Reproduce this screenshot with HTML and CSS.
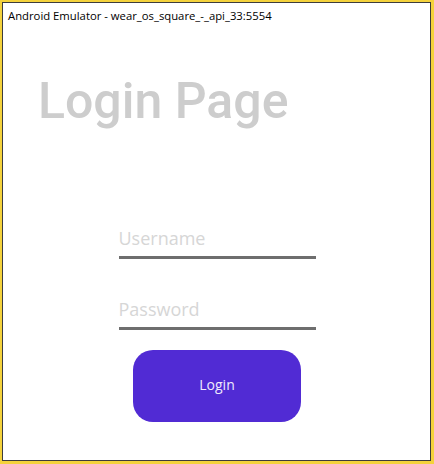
FILE: index.html
```html
<!DOCTYPE html>
<html>
<head>
<meta charset="utf-8">
<link rel="stylesheet" href="styles.css">
</head>
<body>
<div class="frame">
  <div class="window">
    <div class="titlebar">Android Emulator - wear_os_square_-_api_33:5554</div>
    <div class="content">
      <h1 class="heading">Login Page</h1>
      <div class="form">
        <input class="field field-user" type="text" placeholder="Username">
        <input class="field field-pass" type="password" placeholder="Password">
        <button class="login-btn">Login</button>
      </div>
    </div>
  </div>
</div>
</body>
</html>
```
FILE: styles.css
```css
html, body {
  margin: 0;
  padding: 0;
  background: #ffffff;
}
.frame {
  width: 434px;
  height: 464px;
  box-sizing: border-box;
  border-style: solid;
  border-color: #f4d23c;
  border-width: 2px 3px 3px 2px;
}
.window {
  height: 100%;
  box-sizing: border-box;
  border: 1px solid #3c3c3c;
  background: #ffffff;
  display: flex;
  flex-direction: column;
}
.titlebar {
  font-family: "Open Sans", "Noto Sans", sans-serif;
  font-size: 11.3px;
  line-height: 16px;
  color: #000000;
  padding: 5px 0 0 5px;
  height: 21px;
  box-sizing: border-box;
  white-space: nowrap;
}
.content {
  display: flex;
  flex-direction: column;
  flex: 1;
}
.heading {
  margin: 52px 0 0 35px;
  font-family: Roboto, sans-serif;
  font-weight: 500;
  font-size: 50px;
  line-height: 50px;
  height: 50px;
  color: #cdcdcd;
}
.form {
  display: flex;
  flex-direction: column;
  align-items: center;
  margin-top: 100px;
  padding-left: 1px;
}
.field {
  width: 197px;
  box-sizing: border-box;
  border: none;
  border-bottom: 3px solid #6e6e6e;
  outline: none;
  padding: 0 0 6px 0;
  margin: 0;
  font-family: "Open Sans", "Noto Sans", sans-serif;
  font-size: 18px;
  line-height: 24px;
  height: 33px;
  color: #333333;
  background: transparent;
}
.field::placeholder {
  color: #d6d6d6;
}
.field-pass {
  margin-top: 38px;
}
.login-btn {
  margin-top: 20px;
  width: 168px;
  height: 72px;
  border: none;
  border-radius: 20px;
  background: #512bd4;
  color: #efeafc;
  font-family: "Open Sans", "Noto Sans", sans-serif;
  font-size: 14px;
  padding: 0 0 4px 0;
}
```
